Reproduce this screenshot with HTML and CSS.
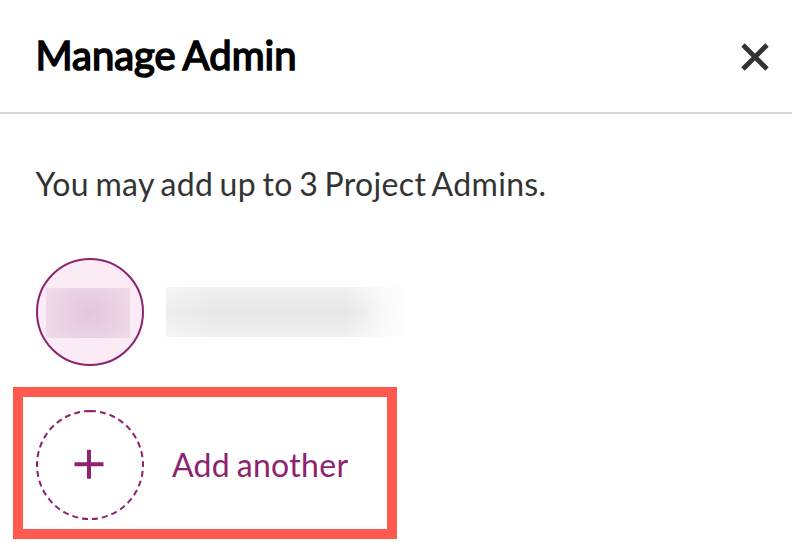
FILE: index.html
```html
<!DOCTYPE html>
<html lang="en">
<head>
<meta charset="utf-8">
<title>Manage Admin</title>
<link rel="stylesheet" href="styles.css">
</head>
<body>
<header class="header">
  <h1 class="title">Manage Admin</h1>
  <button class="close" aria-label="Close"><svg width="28" height="28" viewBox="0 0 28 28"><path d="M2 2L26 26M26 2L2 26"/></svg></button>
</header>
<main class="content">
  <p class="intro">You may add up to 3 Project Admins.</p>
  <div class="admin">
    <div class="avatar"><span class="initials"></span></div>
    <div class="name"></div>
  </div>
  <button class="add">
    <svg class="ring" width="108" height="110" viewBox="0 0 108 110"><path class="dashes" pathLength="336" d="M54 1A53 54 0 0 1 54 109A53 54 0 0 1 54 1"/><path class="plus" d="M38.5 54.3H67.5M53 39.8V68.8"/></svg>
    <span class="label">Add another</span>
  </button>
</main>
</body>
</html>
```
FILE: styles.css
```css
* { box-sizing: border-box; }
body { margin: 0; width: 792px; height: 542px; overflow: hidden; background: #fff; font-family: Lato, sans-serif; }
button { border: 0; background: none; padding: 0; font: inherit; }
.header { display: flex; justify-content: space-between; align-items: center; height: 114px; padding: 0 23px 0 35.5px; border-bottom: 2px solid #d6d6d6; }
.title { margin: 0; padding-bottom: 2px; font-size: 40px; line-height: 48px; font-weight: 400; -webkit-text-stroke: 1.6px #000; letter-spacing: 0; word-spacing: -2px; color: #000; }
.close { display: flex; padding-top: 2px; }
.close svg { fill: none; stroke: #333; stroke-width: 4.8; }
.content { padding: 46px 0 0 13px; }
.intro { margin: 0 0 50px 22.5px; font-size: 32px; line-height: 48px; letter-spacing: 0.34px; word-spacing: -2.1px; color: #333; }
.admin { display: flex; align-items: center; gap: 22px; height: 108px; margin-left: 23px; }
.avatar { width: 108px; height: 108px; padding: 28px 0 0 8px; border: 2px solid #8e226e; border-radius: 50%; background: #faebf5; }
.initials { display: block; width: 84px; height: 50px; background: radial-gradient(ellipse 55px 48px at 52% 50%, #e5c7dd, #e9d0e3 45%, #f0dfe9); }
.name { width: 238px; height: 50px; background: linear-gradient(90deg, rgba(255,255,255,.3), rgba(255,255,255,0) 20%, rgba(255,255,255,0) 76%, rgba(255,255,255,.7) 91%, #fdfdfd), linear-gradient(#f1f1f1, #e7e7e7 50%, #f1f1f1); }
.add { display: flex; align-items: center; gap: 28px; width: 384px; height: 152px; margin-top: 21px; padding: 3px 0 0 13px; border: 10px solid #ff5a4d; color: #8e226e; }
.ring { fill: none; stroke: #8e226e; }
.dashes { stroke-width: 2; stroke-dasharray: 6 4; }
.plus { stroke-width: 4; }
.label { font-size: 32px; line-height: 40px; letter-spacing: 0.3px; word-spacing: -1.8px; }
```
